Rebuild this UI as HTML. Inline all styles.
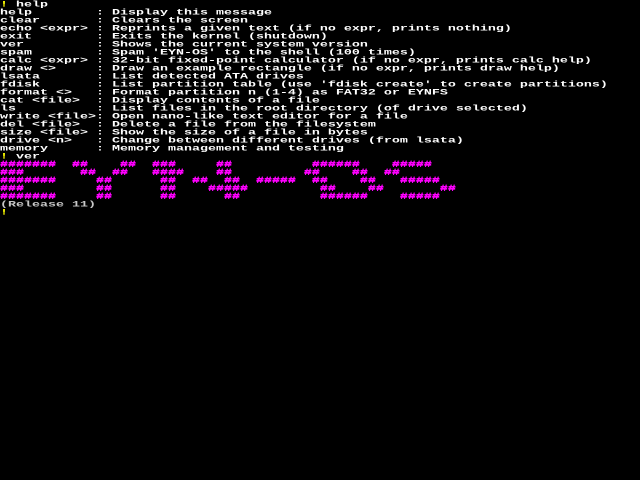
<!DOCTYPE html>
<html><head><style>
html,body{margin:0;padding:0;background:#000;width:640px;height:480px;overflow:hidden}
pre{margin:0;position:absolute;left:0;top:1px;font-family:"Liberation Mono",monospace;font-weight:bold;font-size:13.333px;line-height:13px;color:#fff;transform:scaleY(0.6154);transform-origin:0 0;letter-spacing:0}
.y{color:#ff0}.m{color:#f0f;text-shadow:0 1px 0 #f0f,0 -1px 0 #f0f}.g{color:#c8c8c8}
</style></head><body><pre><span class="y">!</span> help
help        : Display this message
clear       : Clears the screen
echo &lt;expr&gt; : Reprints a given text (if no expr, prints nothing)
exit        : Exits the kernel (shutdown)
ver         : Shows the current system version
spam        : Spam 'EYN-OS' to the shell (100 times)
calc &lt;expr&gt; : 32-bit fixed-point calculator (if no expr, prints calc help)
draw &lt;&gt;     : Draw an example rectangle (if no expr, prints draw help)
lsata       : List detected ATA drives
fdisk       : List partition table (use 'fdisk create' to create partitions)
format &lt;&gt;   : Format partition n (1-4) as FAT32 or EYNFS
cat &lt;file&gt;  : Display contents of a file
ls          : List files in the root directory (of drive selected)
write &lt;file&gt;: Open nano-like text editor for a file
del &lt;file&gt;  : Delete a file from the filesystem
size &lt;file&gt; : Show the size of a file in bytes
drive &lt;n&gt;   : Change between different drives (from lsata)
memory      : Memory management and testing
<span class="y">!</span> ver
<span class="m">#######  ##    ##  ###     ##          ######    #####
###       ##  ##   ####    ##         ##    ##  ##
#######     ##      ##  ##  ##  #####  ##    ##   #####
###         ##      ##    #####         ##    ##       ##
#######     ##      ##      ##          ######    #####</span>
<span class="g">(Release 11)</span>
<span class="y">!</span></pre></body></html>
